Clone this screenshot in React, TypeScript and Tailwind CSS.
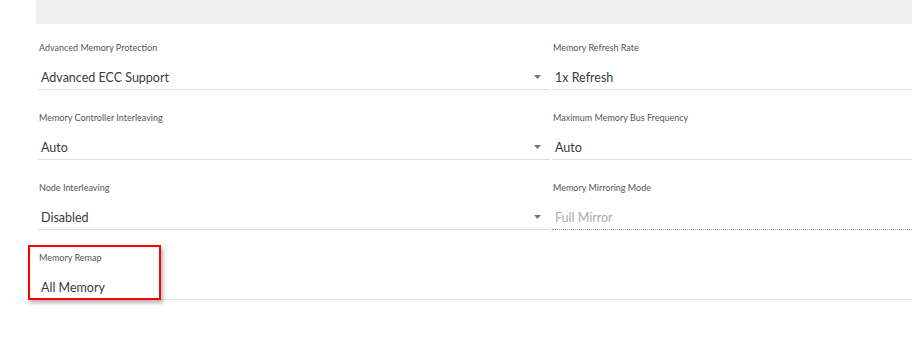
import React from 'react';

type Field = {
  label: string;
  value: string;
  select?: boolean;
  disabled?: boolean;
};

const left: Field[] = [
  { label: 'Advanced Memory Protection', value: 'Advanced ECC Support', select: true },
  { label: 'Memory Controller Interleaving', value: 'Auto', select: true },
  { label: 'Node Interleaving', value: 'Disabled', select: true },
];

const right: Field[] = [
  { label: 'Memory Refresh Rate', value: '1x Refresh' },
  { label: 'Maximum Memory Bus Frequency', value: 'Auto' },
  { label: 'Memory Mirroring Mode', value: 'Full Mirror', disabled: true },
];

const FieldBox: React.FC<{ field: Field; className?: string }> = ({ field, className }) => {
  return (
    <div className={`pt-[17px] ${className ?? ''}`}>
      <div className="pl-[1px] text-[9px] leading-[14px] text-[#555]">{field.label}</div>
      <div
        className={`mt-[13px] flex items-center pl-[3px] pr-[9px] pb-[1px] border-b ${
          field.disabled ? 'border-dotted border-[#999]' : 'border-solid border-[#ddd]'
        }`}
      >
        <span
          className={`flex-1 text-[12.5px] leading-[20px] ${
            field.disabled ? 'text-[#aaa]' : 'text-[#3a3a3a]'
          }`}
        >
          {field.value}
        </span>
        {field.select && (
          <svg width="7" height="4" viewBox="0 0 7 4" className="mb-[3px]">
            <polygon points="0,0 7,0 3.5,4" fill="#777" />
          </svg>
        )}
      </div>
    </div>
  );
};

const App: React.FC = () => {
  return (
    <div className="w-[912px] h-[359px] bg-white overflow-hidden" style={{ fontFamily: 'Lato, "Open Sans", sans-serif' }}>
      <div className="ml-[36px] h-[24px] bg-[#efefef]" />
      <div className="ml-[38px] grid grid-cols-[512px_1fr] gap-x-[3px] gap-y-[4px]">
        {left.map((f, i) => (
          <React.Fragment key={f.label}>
            <FieldBox field={f} />
            <FieldBox field={right[i]} className="-ml-[1px]" />
          </React.Fragment>
        ))}
        <div className="relative col-span-2">
          <FieldBox field={{ label: 'Memory Remap', value: 'All Memory' }} />
          <div className="absolute left-[-10px] top-[11px] w-[133px] h-[55px] border-2 border-[#ff0000] shadow-[2px_3px_4px_rgba(0,0,0,0.3)]" />
        </div>
      </div>
    </div>
  );
};

export default App;
